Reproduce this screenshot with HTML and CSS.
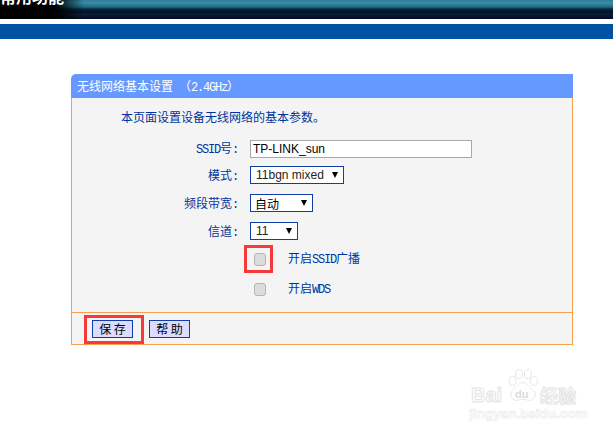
FILE: index.html
```html
<!DOCTYPE html>
<html lang="zh">
<head>
<meta charset="utf-8">
<title>无线网络基本设置</title>
<link rel="stylesheet" href="styles.css">
</head>
<body>
<header class="banner"><span class="banner-title">常用功能</span></header>
<div class="bluebar"></div>
<main class="card">
  <h1 class="card-title">无线网络基本设置<span class="lat"> </span>（<span class="lat">2.4GHz</span>）</h1>
  <section class="card-body">
    <p class="intro">本页面设置设备无线网络的基本参数。</p>
    <div class="form">
      <label class="label label-first"><span class="lat">SSID</span>号<span class="lat">:</span></label>
      <div class="field"><input class="ssid" type="text" value="TP-LINK_sun"></div>
      <label class="label">模式<span class="lat">:</span></label>
      <div class="field"><span class="select w-mode"><span class="val">11bgn mixed</span><i class="arrow"></i></span></div>
      <label class="label">频段带宽<span class="lat">:</span></label>
      <div class="field"><span class="select w-band"><span class="val cjk">自动</span><i class="arrow"></i></span></div>
      <label class="label">信道<span class="lat">:</span></label>
      <div class="field"><span class="select w-chan"><span class="val">11</span><i class="arrow"></i></span></div>
    </div>
    <div class="checks">
      <div class="check-row"><input class="check" type="checkbox"><span class="check-label">开启<span class="lat">SSID</span>广播</span><span class="mark mark-check"></span></div>
      <div class="check-row"><input class="check" type="checkbox"><span class="check-label">开启<span class="lat">WDS</span></span></div>
    </div>
  </section>
  <footer class="card-foot">
    <button class="btn" type="button">保 存</button>
    <button class="btn" type="button">帮 助</button>
    <span class="mark mark-save"></span>
  </footer>
</main>
<div class="watermark">
  <svg class="paw" viewBox="0 0 64 68" aria-hidden="true">
    <g fill="#fff" stroke="#e8e8e8" stroke-width="2">
      <ellipse cx="11" cy="24" rx="7" ry="9"/>
      <ellipse cx="24" cy="10" rx="7" ry="9"/>
      <ellipse cx="42" cy="10" rx="7" ry="9"/>
      <ellipse cx="54" cy="24" rx="7" ry="9"/>
      <path d="M32 27c8 0 11 8 17 12 6 5 9 9 7 15-2 8-10 10-16 8-5-2-11-2-16 0-7 2-14 0-16-8-2-6 1-10 7-15 6-4 9-12 17-12z"/>
    </g>
  </svg>
  <span class="wm-bai">Bai</span><span class="wm-du">du</span><span class="wm-jy">经验</span>
  <span class="wm-url">jingyan.baidu.com</span>
</div>
</body>
</html>
```
FILE: styles.css
```css
* { box-sizing: border-box; }
html, body { margin: 0; padding: 0; }
body {
  width: 613px;
  height: 435px;
  background: #fff;
  overflow: hidden;
  position: relative;
  font-family: "Noto Sans CJK SC", sans-serif;
  font-size: 12px;
  color: #00349c;
}
.lat { font-family: "Liberation Mono", monospace; letter-spacing: -1.2px; line-height: 1; }
.banner {
  height: 19px;
  overflow: hidden;
  background: linear-gradient(to bottom, #2f7f9c 0, #3b8ba5 3px, #1d6a85 7px, #0a2a42 9px, #040f22 12px, #0a1f3a 14px, #020a24 19px);
}
.banner-title {
  display: block;
  margin: -19px 0 0 0;
  padding: 0 0 8px 0;
  font: bold 16px/30px "Noto Sans CJK SC", sans-serif;
  color: #fff;
  width: 84px;
  background: linear-gradient(to right, #000 65%, transparent);
  white-space: nowrap;
}
.bluebar { height: 15px; margin-top: 5px; background: #0053a4; }
.card {
  width: 502px;
  margin: 35px 0 0 71px;
}
.card-title {
  margin: 0;
  height: 24px;
  padding-left: 6px;
  background: #6699ff;
  border-radius: 5px 0 0 0;
  color: #fff;
  font-size: 12px;
  font-weight: normal;
  line-height: 24px;
}
.card-body {
  height: 215px;
  background: #f4f4f4;
  border: solid #f9a04c;
  border-width: 0 1px 1px;
  padding: 10px 0 0;
}
.intro { margin: 0 0 0 49px; line-height: 18px; }
.form {
  display: grid;
  grid-template-columns: 166px auto;
  grid-template-rows: 16px 18px 18px 18px;
  column-gap: 12px;
  row-gap: 10px;
  margin-top: 14px;
  justify-items: start;
  align-items: start;
}
.label { justify-self: end; line-height: 18px; height: 18px; }
.label-first { margin-top: -1px; }
.field { display: flex; height: 18px; align-items: center; }
.ssid {
  width: 222px;
  height: 18px;
  border: 1px solid #a8a8a8;
  padding: 0 2px;
  font: 12px "Liberation Sans", sans-serif;
  color: #000;
  background: #fff;
  outline: none;
}
.select {
  display: flex;
  align-items: center;
  height: 18px;
  border: 1px solid #0f3ea8;
  background: #fff;
  padding: 0 0 0 5px;
  font: 12px "Liberation Sans", sans-serif;
  color: #222;
  position: relative;
  justify-content: space-between;
}
.val.cjk { font-family: "Noto Sans CJK SC", sans-serif; color: #000; margin-left: -1px; }
.w-mode { width: 94px; }
.w-band { width: 63px; }
.w-chan { width: 48px; }
.arrow {
  width: 0;
  height: 0;
  margin-right: 5px;
  border: solid transparent;
  border-width: 6px 3.5px 0;
  border-top-color: #000;
}
.checks { margin-top: 4px; }
.check-row {
  display: flex;
  align-items: center;
  height: 30px;
  padding-left: 182px;
  position: relative;
}
.check-label { line-height: 18px; margin-top: -2px; }
.check {
  appearance: none;
  -webkit-appearance: none;
  width: 12px;
  height: 13px;
  margin: 0 22px 0 0;
  border: 1px solid #b4b4b4;
  border-radius: 3px;
  background: #dcdcdc;
}
.card-foot {
  height: 32px;
  background: #f4f4f4;
  border: 1px solid #f9a04c;
  border-top: 0;
  padding: 7px 0 0 20px;
  display: flex;
  align-items: flex-start;
  gap: 16px;
  position: relative;
}
.btn {
  width: 41px;
  height: 18px;
  padding: 0;
  border: 1px solid #0f3ea8;
  background: #dbdcff;
  color: #000;
  font: 12px/16px "Noto Sans CJK SC", sans-serif;
}
.mark { position: absolute; border: 3px solid #f63a3a; pointer-events: none; }
.mark-check { left: 172px; top: 1px; width: 29px; height: 28px; }
.mark-save { left: 12px; top: 2px; width: 60px; height: 29px; }
.watermark {
  position: absolute;
  left: 469px;
  top: 369px;
  width: 110px;
  height: 52px;
}
.paw { position: absolute; left: 38px; top: 0; width: 32px; height: 34px; }
.wm-bai { position: absolute; left: 2px; top: 15px; font: bold 20px/22px "Liberation Sans", sans-serif; color: #fff; -webkit-text-stroke: 1px #e4e4e4; }
.wm-du { position: absolute; left: 46px; top: 18px; font: bold 11px/14px "Liberation Sans", sans-serif; color: #dcdcdc; }
.wm-jy { position: absolute; left: 71px; top: 16px; font: bold 18px/20px "Noto Sans CJK SC", sans-serif; color: #fff; -webkit-text-stroke: 1px #e4e4e4; }
.wm-url { position: absolute; left: 0; top: 38px; font: bold 13.5px/14px "Liberation Sans", sans-serif; color: #fff; -webkit-text-stroke: 0.7px #ececec; white-space: nowrap; }
```
